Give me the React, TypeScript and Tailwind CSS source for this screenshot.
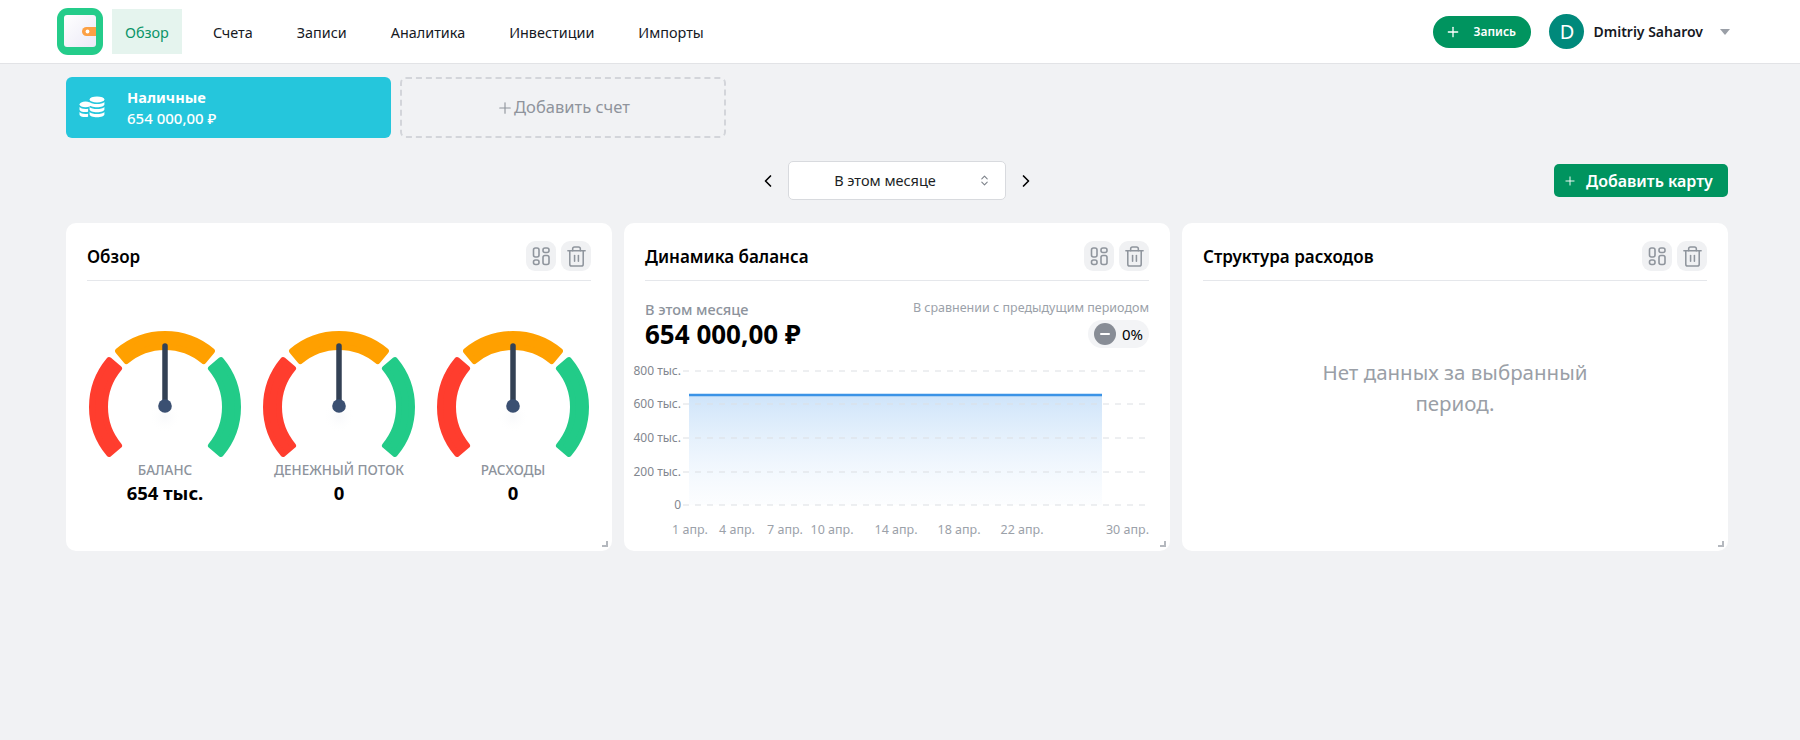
import { ChevronLeft, ChevronRight, ChevronsUpDown, Plus, Trash2 } from "lucide-react";
import type { ReactNode } from "react";

const NAV = ["Обзор", "Счета", "Записи", "Аналитика", "Инвестиции", "Импорты"];

const GAUGES = [
  { label: "БАЛАНС", value: "654 тыс." },
  { label: "ДЕНЕЖНЫЙ ПОТОК", value: "0" },
  { label: "РАСХОДЫ", value: "0" },
];

const Y_TICKS = [
  { label: "800 тыс.", y: 11 },
  { label: "600 тыс.", y: 44 },
  { label: "400 тыс.", y: 78 },
  { label: "200 тыс.", y: 112 },
  { label: "0", y: 145 },
];

const X_TICKS = [
  { label: "1 апр.", x: 66, anchor: "middle" },
  { label: "4 апр.", x: 113, anchor: "middle" },
  { label: "7 апр.", x: 161, anchor: "middle" },
  { label: "10 апр.", x: 208, anchor: "middle" },
  { label: "14 апр.", x: 272, anchor: "middle" },
  { label: "18 апр.", x: 335, anchor: "middle" },
  { label: "22 апр.", x: 398, anchor: "middle" },
  { label: "30 апр.", x: 525, anchor: "end" },
];

const polar = (r: number, deg: number) => {
  const rad = (deg * Math.PI) / 180;
  return `${(87 + r * Math.sin(rad)).toFixed(2)} ${(80 - r * Math.cos(rad)).toFixed(2)}`;
};

const arc = (from: number, to: number) => {
  const outer = 73;
  const inner = 60;
  return `M${polar(outer, from)} A${outer} ${outer} 0 0 1 ${polar(outer, to)} L${polar(inner, to)} A${inner} ${inner} 0 0 0 ${polar(inner, from)} Z`;
};

const Logo = () => (
  <svg width="46" height="47" viewBox="0 0 46 47" className="shrink-0">
    <defs>
      <linearGradient id="wallet" x1="0" y1="0" x2="1" y2="1">
        <stop offset="0" stopColor="#ffffff" />
        <stop offset="1" stopColor="#ebe9f6" />
      </linearGradient>
    </defs>
    <rect width="46" height="47" rx="11" fill="#24cc8a" />
    <rect x="7" y="7" width="32" height="32" rx="3" fill="url(#wallet)" />
    <path d="M25 23.500a4.500 4.500 0 0 1 4.500-4.500h9.500v9h-9.500a4.500 4.500 0 0 1-4.500-4.500z" fill="#fca044" />
    <circle cx="30.500" cy="23.500" r="1.900" fill="#fff" />
  </svg>
);

const Coins = () => (
  <svg width="26" height="24" viewBox="0 0 26 24" fill="#fff">
    <ellipse cx="18" cy="3.400" rx="7.400" ry="3" />
    <path d="M10.600 6c1.400 1.500 4.300 2.100 7.400 2.100s6-.6 7.400-2.100v2.400c0 1.600-3.300 2.800-7.400 2.800s-7.400-1.200-7.400-2.800z" />
    <path d="M10.600 11c1.400 1.500 4.300 2.100 7.400 2.100s6-.6 7.400-2.100v2.400c0 1.600-3.300 2.800-7.400 2.800s-7.400-1.200-7.400-2.800z" />
    <path d="M10.600 16c1.400 1.500 4.300 2.100 7.400 2.100s6-.6 7.400-2.100v2.400c0 1.600-3.300 2.800-7.400 2.800s-7.400-1.200-7.400-2.800z" />
    <ellipse cx="6.500" cy="8.400" rx="6" ry="2.800" />
    <path d="M.5 11c1.100 1.300 3.300 2 6 2 .9 0 1.800-.1 2.600-.2v3c-.8.2-1.700.3-2.600.3-3.300 0-6-1.200-6-2.700z" />
    <path d="M.5 16c1.100 1.300 3.300 2 6 2 .9 0 1.800-.1 2.600-.2v3c-.8.2-1.700.3-2.600.3-3.300 0-6-1.200-6-2.700z" />
  </svg>
);

const LayoutIcon = () => (
  <svg width="24" height="24" viewBox="0 0 24 24" fill="none" stroke="currentColor" strokeWidth="1.600">
    <rect x="4.500" y="4" width="5.500" height="9" rx="2" />
    <rect x="14" y="4" width="6" height="4.500" rx="2" />
    <rect x="4.500" y="16" width="5.500" height="4.500" rx="2" />
    <rect x="14" y="11.500" width="6" height="9" rx="2" />
  </svg>
);

const Gauge = ({ label, value }: { label: string; value: string }) => (
  <div className="flex flex-col items-center">
    <svg width="174" height="134" viewBox="0 0 174 134">
      <defs>
        <radialGradient id="needle-shadow">
          <stop offset="0" stopColor="#eef0f4" stopOpacity="0.4" />
          <stop offset="1" stopColor="#ffffff" stopOpacity="0" />
        </radialGradient>
      </defs>
      <g strokeWidth="6" strokeLinejoin="round" transform="translate(0 1)">
        <path d={arc(-130, -50)} fill="#ff3d2e" stroke="#ff3d2e" />
        <path d={arc(-40, 40)} fill="#ffa000" stroke="#ffa000" />
        <path d={arc(50, 130)} fill="#22cb88" stroke="#22cb88" />
      </g>
      <circle cx="87" cy="91" r="16" fill="url(#needle-shadow)" />
      <line x1="87" y1="20" x2="87" y2="80" stroke="#334155" strokeWidth="5.500" strokeLinecap="round" />
      <circle cx="87" cy="80" r="6.800" fill="#3b5072" />
    </svg>
    <div className="text-[13.500px] leading-[20px] font-medium text-[#8d939c]">{label}</div>
    <div className="text-[18.500px] leading-[26px] font-bold text-black">{value}</div>
  </div>
);

const BalanceChart = () => (
  <svg width="525" height="190" viewBox="0 0 525 190" className="-ml-[21px] mt-[10px] block">
    <defs>
      <linearGradient id="area" x1="0" y1="0" x2="0" y2="1">
        <stop offset="0" stopColor="#c9e1f9" stopOpacity="0.9" />
        <stop offset="1" stopColor="#e3effc" stopOpacity="0.1" />
      </linearGradient>
    </defs>
    <rect x="65" y="35" width="413" height="110" fill="url(#area)" />
    {Y_TICKS.map((t) => (
      <g key={t.label}>
        <line x1="59" y1={t.y} x2="525" y2={t.y} stroke="#dcdfe3" strokeDasharray="6 6" />
        <text x="57" y={t.y + 4} textAnchor="end" fontSize="12" fill="#82878f">
          {t.label}
        </text>
      </g>
    ))}
    <line x1="65" y1="35" x2="478" y2="35" stroke="#3b93e6" strokeWidth="2.500" />
    {X_TICKS.map((t) => (
      <text key={t.label} x={t.x} y="174" textAnchor={t.anchor as "middle" | "end"} fontSize="12.500" fill="#9ba1a9">
        {t.label}
      </text>
    ))}
  </svg>
);

const Card = ({ title, children }: { title: string; children: ReactNode }) => (
  <section className="relative h-[328px] overflow-hidden rounded-[10px] bg-white px-[21px] pt-[18px]">
    <header className="flex h-[40px] items-start justify-between border-b border-[#e5e7eb]">
      <h2 className="pt-[3px] text-[17px] leading-[25px] font-semibold text-black">{title}</h2>
      <div className="flex gap-[5px]">
        <button className="flex h-[30px] w-[30px] items-center justify-center rounded-[9px] bg-[#f0f1f3] text-[#8f959d]">
          <LayoutIcon />
        </button>
        <button className="flex h-[30px] w-[30px] items-center justify-center rounded-[9px] bg-[#f0f1f3] text-[#8f959d]">
          <Trash2 size={23} strokeWidth={1.6} />
        </button>
      </div>
    </header>
    {children}
    <span className="absolute right-[4px] bottom-[4px] h-[6px] w-[6px] border-r-2 border-b-2 border-[#b4b8be]" />
  </section>
);

export default function App() {
  return (
    <div className="min-h-[740px] bg-[#f1f2f4] font-['Noto_Sans',sans-serif] text-black">
      <nav className="flex h-[64px] items-center border-b border-[#e2e3e6] bg-white pr-[70px] pl-[57px]">
        <Logo />
        <ul className="ml-[9px] flex gap-[18px]">
          {NAV.map((item, i) => (
            <li
              key={item}
              className={
                i === 0
                  ? "flex h-[45px] items-center bg-[#e5f4ee] px-[13px] pt-[2px] text-[14.400px] text-[#0a9468]"
                  : "flex h-[45px] items-center px-[13px] pt-[2px] text-[14.400px] text-[#16191f]"
              }
            >
              {item}
            </li>
          ))}
        </ul>
        <button className="ml-auto flex h-[32px] w-[98px] items-center rounded-full bg-[#00945f] pl-[12px] text-white">
          <Plus size={16} strokeWidth={2} />
          <span className="ml-[12px] text-[12px] font-semibold">Запись</span>
        </button>
        <div className="ml-[18px] flex h-[35px] w-[35px] items-center justify-center rounded-full bg-[#00897b] text-[20px] text-white">
          D
        </div>
        <span className="ml-[9px] text-[14px] font-semibold text-[#16191f]">Dmitriy Saharov</span>
        <span className="ml-[17px] h-0 w-0 border-x-[5px] border-t-[6px] border-x-transparent border-t-[#9a9fa7]" />
      </nav>

      <main className="ml-[66px] w-[1662px]">
        <div className="flex gap-[9px] pt-[13px]">
          <div className="flex h-[61px] w-[325px] items-center rounded-[6px] bg-[#25c6dc] pl-[13px] text-white">
            <Coins />
            <div className="ml-[22px]">
              <div className="text-[14.600px] leading-[21px] font-bold">Наличные</div>
              <div className="text-[15px] leading-[21px] font-medium">654 000,00 ₽</div>
            </div>
          </div>
          <button className="flex h-[61px] w-[326px] items-center justify-center rounded-[6px] border-2 border-dashed border-[#d3d5da] text-[16.500px] text-[#8f949c]">
            <Plus size={18} strokeWidth={1.5} />
            Добавить счет
          </button>
        </div>

        <div className="mt-[23px] grid grid-cols-[1fr_auto_1fr] items-center">
          <div />
          <div className="flex items-center gap-[10px]">
            <ChevronLeft size={20} className="text-black" />
            <button className="relative flex h-[39px] w-[218px] items-center justify-center rounded-[5px] border border-[#d8dade] bg-white pr-[24px] text-[14.500px] text-[#1c1f25]">
              В этом месяце
              <ChevronsUpDown size={13} className="absolute right-[14px] text-[#7d828a]" />
            </button>
            <ChevronRight size={20} className="text-black" />
          </div>
          <div className="flex justify-end">
            <button className="flex h-[33px] w-[174px] items-center rounded-[5px] bg-[#00945f] pl-[9px] text-white">
              <Plus size={14} strokeWidth={1.6} />
              <span className="ml-[9px] text-[16px] font-semibold">Добавить карту</span>
            </button>
          </div>
        </div>

        <div className="mt-[23px] grid grid-cols-3 gap-[12px]">
          <Card title="Обзор">
            <div className="-mx-[9px] mt-[45px] grid grid-cols-3">
              {GAUGES.map((g) => (
                <Gauge key={g.label} {...g} />
              ))}
            </div>
          </Card>

          <Card title="Динамика баланса">
            <div className="flex justify-between pt-[19px]">
              <div>
                <div className="text-[14.500px] leading-[19px] font-medium text-[#8d939c]">В этом месяце</div>
                <div className="text-[26px] leading-[31px] font-bold text-black">654 000,00 ₽</div>
              </div>
              <div className="flex flex-col items-end">
                <div className="text-[12.500px] leading-[16px] text-[#9ba1a9]">В сравнении с предыдущим периодом</div>
                <div className="mt-[4px] flex h-[28px] w-[61px] items-center gap-[6px] rounded-full bg-[#f3f4f6] pl-[6px]">
                  <span className="flex h-[22px] w-[22px] items-center justify-center rounded-full bg-[#888d96]">
                    <span className="h-[2px] w-[10px] rounded-full bg-white" />
                  </span>
                  <span className="text-[15px] text-black">0%</span>
                </div>
              </div>
            </div>
            <BalanceChart />
          </Card>

          <Card title="Структура расходов">
            <p className="mx-auto mt-[76px] w-[300px] text-center text-[20.500px] leading-[31px] text-[#9a9fa7]">
              Нет данных за выбранный период.
            </p>
          </Card>
        </div>
      </main>
    </div>
  );
}
